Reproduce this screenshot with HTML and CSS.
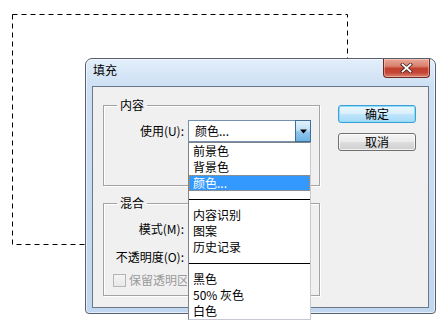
FILE: index.html
```html
<!DOCTYPE html>
<html lang="zh-CN">
<head>
<meta charset="utf-8">
<title>填充</title>
<link rel="stylesheet" href="styles.css">
</head>
<body>
<div class="stage">
  <svg class="marquee" width="438" height="328" viewBox="0 0 438 328">
    <rect x="12.5" y="14.5" width="335" height="230" fill="none" stroke="#000" stroke-width="1" stroke-dasharray="5 4"/>
  </svg>

  <div class="window">
    <div class="titlebar">
      <span class="title">填充</span>
      <div class="close">
        <svg width="13" height="10" viewBox="0 0 13 10">
          <path d="M2.5 1.5 L10.5 8.5 M10.5 1.5 L2.5 8.5" stroke="#4a2420" stroke-width="3.4" stroke-linecap="square"/>
          <path d="M2.5 1.5 L10.5 8.5 M10.5 1.5 L2.5 8.5" stroke="#fff" stroke-width="1.7" stroke-linecap="square"/>
        </svg>
      </div>
    </div>
    <div class="client">
      <div class="groups">
        <div class="group group-content">
          <span class="legend">内容</span>
          <div class="field-row">
            <span class="label">使用(U):</span>
            <div class="select">
              <span class="select-text">颜色...</span>
              <span class="drop-btn">
                <svg width="7" height="5" viewBox="0 0 7 5"><polygon points="0,0.5 7,0.5 3.5,4.5" fill="#000"/></svg>
              </span>
            </div>
          </div>
        </div>
        <div class="group group-blend">
          <span class="legend">混合</span>
          <div class="field-row">
            <span class="label">模式(M):</span>
            <div class="select"></div>
          </div>
          <div class="field-row row-gap">
            <span class="label">不透明度(O):</span>
            <div class="select"></div>
          </div>
          <div class="check-row">
            <span class="checkbox"></span>
            <span class="check-label">保留透明区域(P)</span>
          </div>
        </div>
      </div>
      <div class="buttons">
        <button class="btn btn-default">确定</button>
        <button class="btn">取消</button>
      </div>
    </div>
  </div>

  <ul class="dropdown">
    <li class="item">前景色</li>
    <li class="item">背景色</li>
    <li class="item selected">颜色...</li>
    <li class="sep"></li>
    <li class="item">内容识别</li>
    <li class="item">图案</li>
    <li class="item">历史记录</li>
    <li class="sep"></li>
    <li class="item">黑色</li>
    <li class="item">50% 灰色</li>
    <li class="item">白色</li>
  </ul>
</div>
</body>
</html>
```

FILE: styles.css
```css
* {
  box-sizing: border-box;
}

body {
  margin: 0;
  background: #fff;
  color: #000;
  font-family: "Noto Sans CJK SC", "Noto Sans", sans-serif;
  font-size: 12px;
  line-height: 16px;
}

.stage {
  position: relative;
  width: 438px;
  height: 328px;
  overflow: hidden;
}

.marquee {
  position: absolute;
  left: 0;
  top: 0;
}

/* dialog window */
.window {
  position: absolute;
  left: 85px;
  top: 58px;
  width: 351px;
  height: 256px;
  border: 1px solid #56606e;
  border-radius: 7px 7px 4px 4px;
  background: linear-gradient(to bottom, #e3eefa 0px, #cde0f4 27px, #c1d6ef 100%);
  box-shadow: inset 0 0 0 1px rgba(255, 255, 255, 0.6);
  padding: 0 6px 5px 6px;
  display: flex;
  flex-direction: column;
}

.titlebar {
  height: 27px;
  display: flex;
  justify-content: space-between;
  align-items: flex-start;
  flex: none;
}

.title {
  margin: 3px 0 0 1px;
}

.close {
  width: 47px;
  height: 19px;
  margin-right: -1px;
  border: 1px solid #6b2b24;
  border-top: none;
  border-radius: 0 0 4px 4px;
  background: linear-gradient(to bottom, #eaa898 0%, #d9806e 40%, #c2402f 52%, #c44636 75%, #d9826c 100%);
  box-shadow: inset 0 0 0 1px rgba(255, 220, 210, 0.45);
  display: flex;
  align-items: center;
  justify-content: center;
}

.client {
  flex: 1;
  border: 1px solid #6c7888;
  background: #f0f0f0;
  padding: 18px 0 0 10px;
  display: flex;
  align-items: flex-start;
  gap: 18px;
}

.groups {
  display: flex;
  flex-direction: column;
  gap: 17px;
  width: 217px;
}

.group {
  position: relative;
  border: 1px solid #a3a3a3;
  box-shadow: inset 1px 1px 0 #fff, 1px 1px 0 #fff;
  padding-top: 14px;
}

.group-content {
  height: 81px;
}

.group-blend {
  height: 93px;
}

.legend {
  position: absolute;
  top: -9px;
  left: 13px;
  padding: 0 3px;
  background: #f0f0f0;
  line-height: 16px;
}

.field-row {
  display: grid;
  grid-template-columns: 80px 123px;
  column-gap: 4px;
  align-items: center;
}

.row-gap {
  margin-top: 6px;
}

.label {
  text-align: right;
  white-space: nowrap;
}

.select {
  height: 22px;
  border: 1px solid #7591b0;
  background: #fff;
  display: flex;
  align-items: center;
  padding-left: 6px;
}

.select-text {
  flex: 1;
}

.drop-btn {
  width: 16px;
  height: 22px;
  margin: -1px -1px -1px 0;
  border: 1px solid #3d6f98;
  background: linear-gradient(to bottom, #e3f2fc 0%, #bfe0f7 45%, #8ec6ec 55%, #6fb3e2 100%);
  display: flex;
  align-items: center;
  justify-content: center;
}

.check-row {
  margin-top: 4px;
  height: 16px;
  padding-left: 9px;
  display: flex;
  align-items: center;
  gap: 3px;
}

.checkbox {
  width: 13px;
  height: 13px;
  border: 1px solid #b5b5b5;
  background: linear-gradient(to bottom, #f4f4f4, #e9e9e9);
  flex: none;
}

.check-label {
  color: #9a9a9a;
  white-space: nowrap;
  width: 58px;
  overflow: hidden;
}

.buttons {
  display: flex;
  flex-direction: column;
  gap: 10px;
  width: 78px;
}

.btn {
  height: 18px;
  padding: 0;
  margin: 0;
  font: inherit;
  line-height: 16px;
  color: #000;
  border: 1px solid #707070;
  border-radius: 3px;
  background: linear-gradient(to bottom, #f4f4f4 0%, #ebebeb 48%, #dddddd 52%, #cfcfcf 100%);
  box-shadow: inset 0 0 0 1px rgba(255, 255, 255, 0.7);
}

.btn-default {
  border-color: #3c9fd8;
  background: linear-gradient(to bottom, #eaf6fd 0%, #d9f0fc 48%, #bee6fd 52%, #a7d9f5 100%);
  box-shadow: inset 0 0 0 1px #8fdcf8;
}

/* open dropdown list */
.dropdown {
  position: absolute;
  left: 188px;
  top: 142px;
  width: 123px;
  margin: 0;
  padding: 0;
  list-style: none;
  background: #fff;
  border: 1px solid #7e8289;
  border-right-color: #c9c9d6;
  border-bottom-color: #c9c9d6;
}

.item {
  height: 16px;
  line-height: 16px;
  padding-left: 4px;
  white-space: nowrap;
}

.selected {
  background: #3399ff;
  color: #fff;
  outline: 1px dotted #d9862e;
  outline-offset: -1px;
}

.sep {
  height: 16px;
  display: flex;
  align-items: center;
}

.sep::before {
  content: "";
  flex: 1;
  height: 1px;
  background: #000;
}
```
